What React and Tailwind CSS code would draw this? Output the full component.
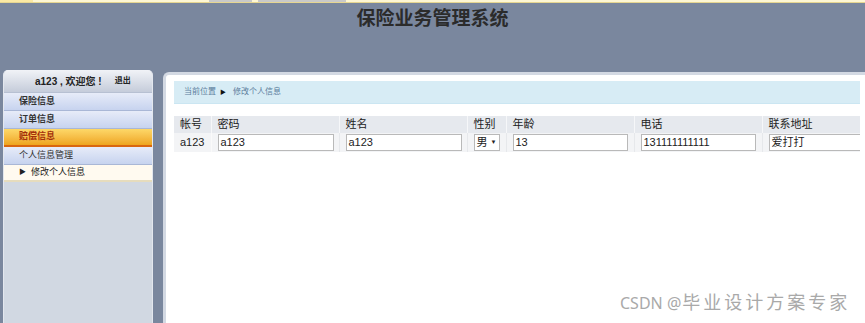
export default function App() {
  const font = { fontFamily: '"Liberation Sans", "Noto Sans CJK SC", sans-serif' };

  const menu = [
    { label: '保险信息' },
    { label: '订单信息' },
    { label: '赔偿信息', active: true },
    { label: '个人信息管理', plain: true },
  ];

  return (
    <div className="relative h-[323px] w-[865px] overflow-hidden bg-[#7a879e]" style={font}>
      {/* browser info bar remnant */}
      <div className="flex h-[3px] border-b border-[#e6d691] bg-[#fef7d4]">
        <div className="w-[33px] bg-[#fbe9a4]" />
        <div className="ml-[176px] w-[43px] bg-[#c9c9c9]" />
        <div className="ml-[6px] w-[88px] bg-[#c9c9c9]" />
      </div>

      {/* header */}
      <div className="flex h-[67px] justify-center">
        <h1 className="mt-[4px] text-[19px] font-bold leading-[24px] text-[#2b2b2b]">保险业务管理系统</h1>
      </div>

      <div className="flex h-[260px] gap-[10px] pl-[3px]">
        {/* sidebar */}
        <aside className="flex w-[150px] flex-col overflow-hidden rounded-t-[5px] border-x border-[#e3e7ee] bg-[#d1d8e2]">
          <div className="flex h-[23px] shrink-0 items-center border-b border-[#b7c0d2] bg-gradient-to-b from-[#f1f3f7] to-[#c5ccda] pl-[31px] font-bold text-[#222]">
            <span className="text-[10px]">a123 , 欢迎您 !</span>
            <span className="ml-[13px] text-[8px]">退出</span>
          </div>
          {menu.map((m) => (
            <div
              key={m.label}
              className={
                m.active
                  ? 'flex h-[18px] shrink-0 items-center border-b-2 border-[#d9660f] bg-gradient-to-b from-[#fdd868] to-[#eea51a] pl-[15px] text-[9px] font-bold text-[#a4300c]'
                  : 'flex h-[18px] shrink-0 items-center border-b border-[#a9b7d6] bg-gradient-to-b from-[#e7ecf8] to-[#c7d3ef] pl-[15px] text-[9px] text-[#333] ' +
                    (m.plain ? 'font-normal' : 'font-bold')
              }
            >
              {m.label}
            </div>
          ))}
          <div className="flex h-[17px] shrink-0 items-center border-b-2 border-[#e6dcbd] bg-[#fffaf0] pl-[15px] text-[9px] text-[#222]">
            <span className="text-[7px]">▶</span>
            <span className="ml-[5px]">修改个人信息</span>
          </div>
        </aside>

        {/* main */}
        <main className="mt-[2px] flex-1 overflow-hidden rounded-tl-[6px] border-l-[3px] border-t-[3px] border-[#d3d9e3] bg-white pl-[8px] pr-[5px] pt-[6px]">
          <div className="flex h-[23px] items-center border-b border-[#cbe6f2] bg-[#d7ecf5] pl-[10px] text-[8px] text-[#5b7c9c]">
            <span>当前位置</span>
            <span className="ml-[4px] text-[6px] text-[#111]">▶</span>
            <span className="ml-[7px]">修改个人信息</span>
          </div>

          <div className="mt-[12px] overflow-hidden">
            <table className="w-[700px] table-fixed border-collapse text-[11px] text-[#222]">
              <colgroup>
                <col className="w-[37px]" />
                <col className="w-[128px]" />
                <col className="w-[128px]" />
                <col className="w-[39px]" />
                <col className="w-[128px]" />
                <col className="w-[128px]" />
                <col className="w-[112px]" />
              </colgroup>
              <thead>
                <tr className="h-[17px] bg-[#e6e9ee] text-left">
                  {['帐号', '密码', '姓名', '性别', '年龄', '电话', '联系地址'].map((h) => (
                    <th key={h} className="border-r border-[#f6f7f9] pl-[6px] font-normal">
                      {h}
                    </th>
                  ))}
                </tr>
              </thead>
              <tbody>
                <tr className="h-[19px] bg-[#f3f4f6]">
                  <td className="border-r border-[#fafafa] pl-[6px]">a123</td>
                  {['a123', 'a123'].map((v, i) => (
                    <td key={i} className="border-r border-[#e6e8eb] pl-[6px]">
                      <div className="h-[17px] w-[116px] border border-[#b9b9b9] bg-white pl-[2px] leading-[15px]">{v}</div>
                    </td>
                  ))}
                  <td className="border-r border-[#e6e8eb] pl-[6px]">
                    <div className="flex h-[17px] w-[26px] items-center border border-[#b9b9b9] bg-white pl-[2px]">
                      <span>男</span>
                      <span className="ml-[3px] text-[6px]">▼</span>
                    </div>
                  </td>
                  {['13', '131111111111', '爱打打'].map((v, i) => (
                    <td key={i} className="border-r border-[#e6e8eb] pl-[6px]">
                      <div className="h-[17px] w-[115px] border border-[#b9b9b9] bg-white pl-[2px] leading-[15px]">{v}</div>
                    </td>
                  ))}
                </tr>
              </tbody>
            </table>
          </div>
        </main>
      </div>

      <div className="absolute left-[620px] top-[289px] flex items-baseline text-[#a9a9a9]" style={{ fontFamily: '"Noto Sans", "Noto Sans CJK SC", sans-serif' }}>
        <span className="text-[16px]">CSDN @</span>
        <span className="ml-[1px] text-[18px] tracking-[3px]">毕业设计方案专家</span>
      </div>
    </div>
  );
}
